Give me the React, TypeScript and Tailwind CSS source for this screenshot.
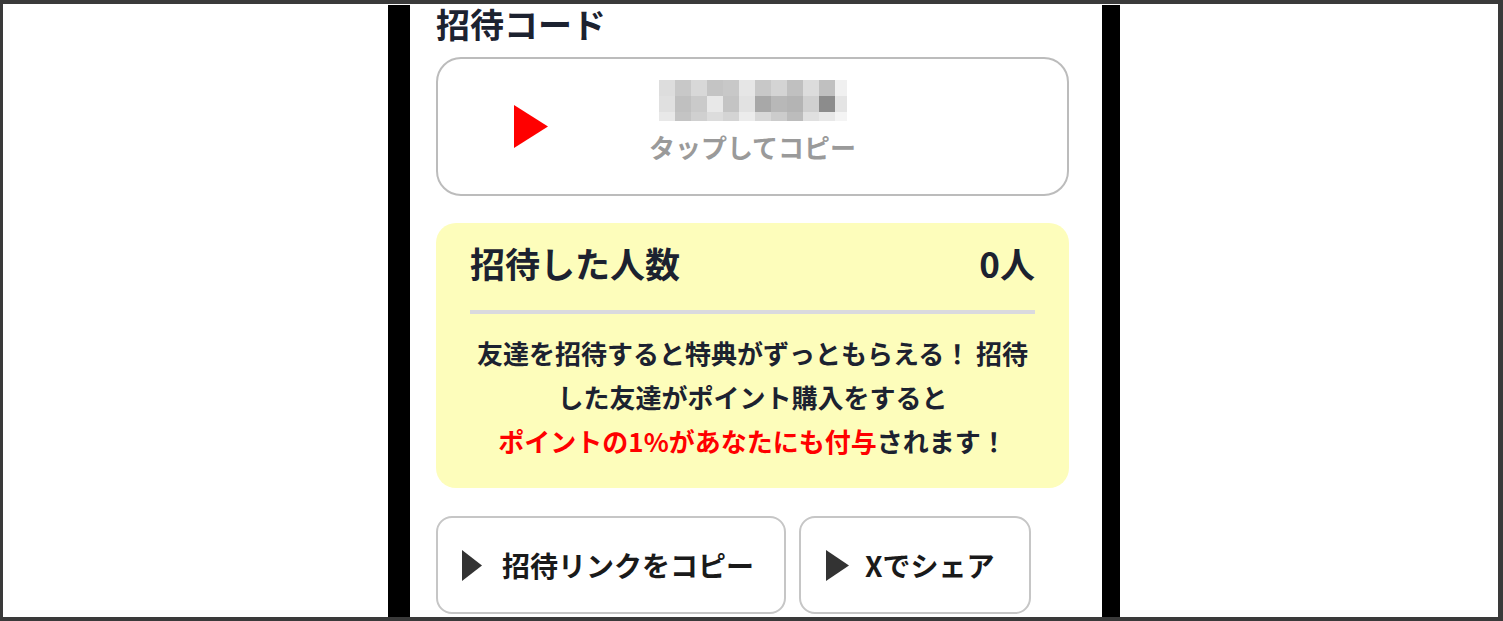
import React from 'react';

const mosaic = [
  ['#dddddd', '#c8c8c8', '#d8d8d8', '#c4c4c4', '#c8c8c8', '#e6e6e6', '#c8c8c8', '#d4d4d4', '#c0c0c0', '#dcdcdc', '#c0c0c0', '#f0f0f0'],
  ['#e0e0e0', '#c0c0c0', '#cacaca', '#e8e8e8', '#c4c4c4', '#e2e2e2', '#a8a8a8', '#b8b8b8', '#b4b4b4', '#d0d0d0', '#8c8c8c', '#e4e4e4'],
  ['#e8e8e8', '#c4c4c4', '#d0d0d0', '#dcdcdc', '#d4d4d4', '#ececec', '#d8d8d8', '#cccccc', '#bcbcbc', '#e0e0e0', '#e8e8e8', '#f4f4f4'],
];

function BlurredCode() {
  const rowH = [16, 16, 9];
  const rowY = [0, 16, 32];
  return (
    <svg width="188" height="41" viewBox="0 0 188 41">
      {mosaic.map((row, r) =>
        row.map((c, i) => (
          <rect key={`${r}-${i}`} x={i * 16} y={rowY[r]} width={i === 11 ? 12 : 16} height={rowH[r]} fill={c} />
        ))
      )}
    </svg>
  );
}

function Play({ w, h, color }: { w: number; h: number; color: string }) {
  return (
    <svg width={w} height={h} viewBox={`0 0 ${w} ${h}`} className="shrink-0">
      <polygon points={`0,0 ${w},${h / 2} 0,${h}`} fill={color} />
    </svg>
  );
}

export default function App() {
  return (
    <div className="w-[1503px] h-[621px] bg-[#3a3a3a] pt-[4px] pl-[3px] pr-[5px] pb-[4px] font-['Noto_Sans_CJK_JP',sans-serif]">
      <div className="flex h-full bg-white overflow-hidden">
        <div className="w-[385px] shrink-0" />
        <div className="w-[22px] shrink-0 mt-px bg-black" />

        {/* main column */}
        <div className="w-[692px] shrink-0 pl-[26px]">
          <h2 className="text-[34px] leading-[40px] font-bold text-[#1c2230] mb-[13px]">招待コード</h2>

          <button className="relative w-[633px] h-[139px] border-2 border-[#bcbcbc] rounded-[25px] bg-white flex flex-col items-center pt-[21px]">
            <span className="absolute left-[76px] top-[46px]">
              <Play w={34} h={43} color="#ff0000" />
            </span>
            <BlurredCode />
            <span className="mt-[13px] text-[26px] leading-[26px] font-bold text-[#9a9a9a]">タップしてコピー</span>
          </button>

          <div className="w-[633px] mt-[27px] bg-[#fdfdbb] rounded-[20px] px-[34px] pt-[21px] pb-[25px]">
            <div className="flex items-center justify-between text-[35px] leading-[38px] font-bold text-[#1c2230]">
              <span>招待した人数</span>
              <span>0人</span>
            </div>
            <div className="h-[4px] bg-[#dadade] mt-[28px]" />
            <p className="mt-[17px] text-center text-[26px] leading-[44px] font-bold text-[#1c2230]">
              友達を招待すると特典がずっともらえる！ 招待した友達がポイント購入をすると
              <br />
              <span className="text-[#ff0000]">ポイントの1%があなたにも付与</span>されます！
            </p>
          </div>

          <div className="flex gap-[13px] mt-[28px]">
            <button className="w-[350px] h-[98px] shrink-0 border-2 border-[#c6c6c6] rounded-[16px] bg-white flex items-center pl-[24px] gap-[20px]">
              <Play w={20} h={31} color="#333333" />
              <span className="text-[28px] leading-[28px] font-bold text-[#1a1a1a]">招待リンクをコピー</span>
            </button>
            <button className="w-[232px] h-[98px] shrink-0 border-2 border-[#c6c6c6] rounded-[16px] bg-white flex items-center pl-[25px] gap-[16px]">
              <Play w={23} h={31} color="#333333" />
              <span className="text-[28px] leading-[28px] font-bold text-[#1a1a1a]">Xでシェア</span>
            </button>
          </div>
        </div>

        <div className="w-[18px] shrink-0 mt-px bg-black" />
        <div className="flex-1" />
      </div>
    </div>
  );
}
